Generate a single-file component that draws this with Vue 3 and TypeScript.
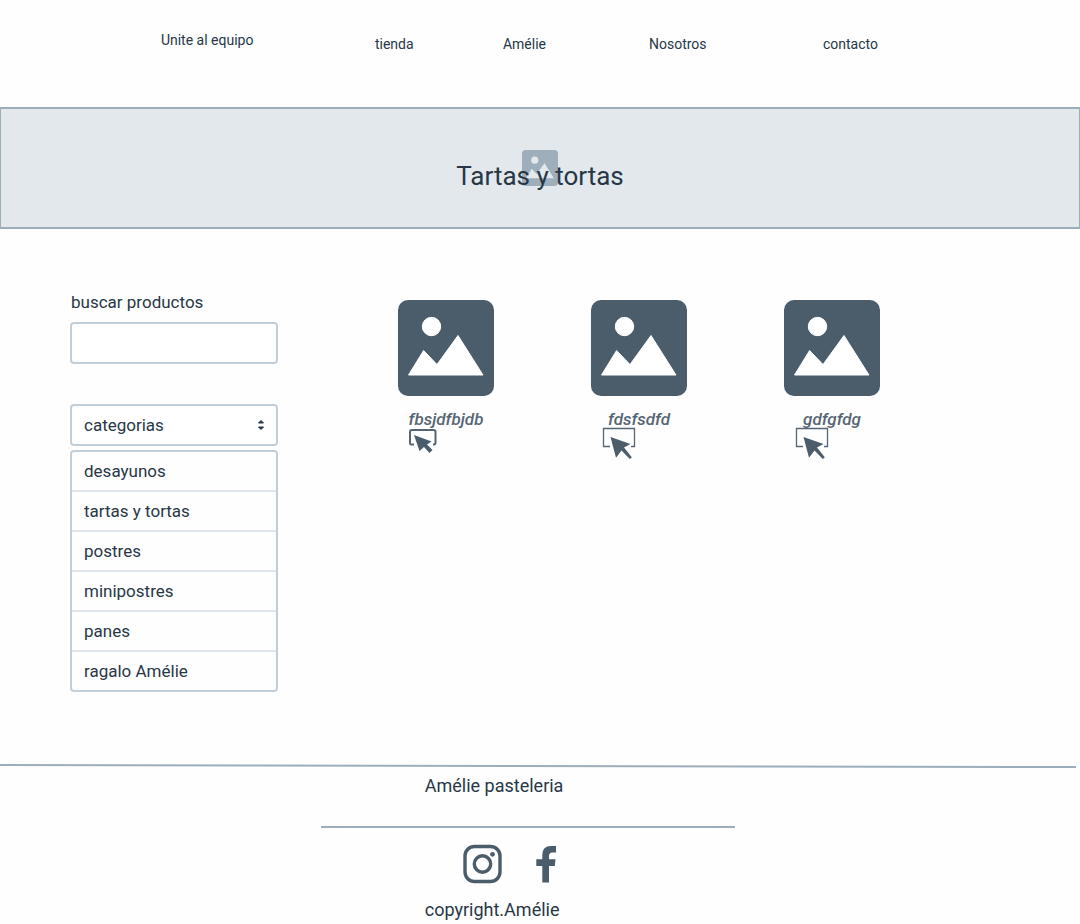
<script setup lang="ts">
import { ref } from 'vue'

interface Product {
  id: number
  name: string
  compact: boolean
}

const links: string[] = ['Unite al equipo', 'tienda', 'Amélie', 'Nosotros', 'contacto']
const categories: string[] = ['desayunos', 'tartas y tortas', 'postres', 'minipostres', 'panes', 'ragalo Amélie']
const products: Product[] = [
  { id: 1, name: 'fbsjdfbjdb', compact: true },
  { id: 2, name: 'fdsfsdfd', compact: false },
  { id: 3, name: 'gdfgfdg', compact: false },
]

const search = ref('')
const category = ref('')
</script>

<template>
  <div class="page">
    <nav class="nav" aria-label="Principal">
      <a v-for="link in links" :key="link" class="nav-link" href="#">{{ link }}</a>
    </nav>

    <header class="banner">
      <svg class="banner-icon" viewBox="0 0 96 96" aria-hidden="true">
        <rect class="banner-tile" width="96" height="96" rx="10" />
        <circle class="banner-cut" cx="34" cy="27" r="9.5" />
        <path class="banner-cut" d="M11 75 L26 50 L39 64 L60 35 L85 75 Z" />
      </svg>
      <h1 class="title">Tartas y tortas</h1>
    </header>

    <main class="content">
      <aside class="sidebar">
        <label class="label" for="search">buscar productos</label>
        <input id="search" v-model="search" class="field" type="text" />

        <div class="select-wrap">
          <select v-model="category" class="field select" aria-label="categorias">
            <option value="">categorias</option>
            <option v-for="item in categories" :key="item" :value="item">{{ item }}</option>
          </select>
          <svg class="arrows" viewBox="0 0 8 12" aria-hidden="true">
            <path d="M4 1.500 L6.500 4 H1.500 Z M4 10.500 L6.500 8 H1.500 Z" />
          </svg>
        </div>
        <ul class="options">
          <li v-for="item in categories" :key="item" class="option">
            <button class="option-button" type="button" @click="category = item">{{ item }}</button>
          </li>
        </ul>
      </aside>

      <section class="products" aria-label="Productos">
        <article v-for="product in products" :key="product.id" class="product">
          <svg class="picture" viewBox="0 0 96 96" aria-hidden="true">
            <rect class="tile" width="96" height="96" rx="10" />
            <circle class="cut" cx="33.500" cy="26.500" r="9.200" />
            <path class="cut" d="M10.500 75 L25.600 50.500 L39 64.500 L60 35.500 L85 75 Z" />
          </svg>
          <h2 class="name">{{ product.name }}</h2>
          <button class="pick" type="button" :aria-label="'Elegir ' + product.name">
            <svg v-if="product.compact" class="pick-icon" viewBox="0 0 34 34" aria-hidden="true">
              <path class="frame thick" d="M5 17.500 H2.500 Q1 17.500 1 16 V5 Q1 3 3 3 H24.500 Q26.500 3 26.500 5 V15.500 Q26.500 17.500 25 17.500 H24" />
              <path class="cursor" d="M5 8 L22.500 14.500 L18 17.500 L23.500 23 L20.500 26 L15 20 L10.500 24 Z" />
            </svg>
            <svg v-else class="pick-icon" viewBox="0 0 34 34" aria-hidden="true">
              <path class="frame" d="M8 19.500 H1.500 V1.500 H32.500 V19.500 H29" />
              <path class="cursor" d="M8.500 10 L28.500 17 L22 20.500 L29.800 30.300 L27.800 32 L19.500 23.500 L14 30.800 Z" />
            </svg>
          </button>
        </article>
      </section>
    </main>

    <footer class="footer">
      <svg class="rule" viewBox="0 0 1080 4" preserveAspectRatio="none" aria-hidden="true">
        <line x1="0" y1="1" x2="1076" y2="3" />
      </svg>
      <div class="footer-body">
        <p class="footer-text brand">Amélie pasteleria</p>
        <hr class="divider" />
        <div class="social">
          <a class="social-link" href="#" aria-label="Instagram">
            <svg class="social-icon" viewBox="0 0 40 40" aria-hidden="true">
              <rect class="line" x="3" y="2.500" width="35" height="35" rx="9.500" />
              <circle class="line" cx="20.500" cy="20" r="8.200" />
              <circle class="solid" cx="30.500" cy="10.300" r="2.400" />
            </svg>
          </a>
          <a class="social-link" href="#" aria-label="Facebook">
            <svg class="social-icon" viewBox="0 0 40 40" aria-hidden="true">
              <path class="solid" d="M16.300 38.500 V22 H10.300 V15.300 H16.300 V11 Q16.300 2 25 2 H30 V8.500 H26.500 Q23 8.500 23 12 V15.300 H29.500 L28.800 22 H23 V38.500 Z" />
            </svg>
          </a>
        </div>
        <p class="footer-text">copyright.Amélie</p>
      </div>
    </footer>
  </div>
</template>

<style>
body {
  margin: 0;
  background: #fefefe;
}
</style>

<style scoped>
.page {
  font-family: Roboto, "Liberation Sans", sans-serif;
  font-size: 17px;
  line-height: 24px;
  color: #273746;
}

.nav {
  display: grid;
  grid-template-columns: 214fr 128fr 146fr 174fr 257fr;
  align-items: end;
  height: 24px;
  padding: 30px 0 53px 14.9%;
  font-size: 14px;
  line-height: 20px;
}

.nav-link {
  justify-self: start;
  color: inherit;
  text-decoration: none;
  white-space: nowrap;
}

.nav-link:first-child {
  align-self: start;
}

.banner {
  position: relative;
  padding: 50px 0 34px;
  border: solid #9caebc;
  border-width: 2px 1px;
  background: #e2e8ec;
}

.banner-icon {
  position: absolute;
  top: 50%;
  left: 50%;
  width: 36px;
  height: 36px;
  margin: -18px 0 0 -18px;
}

.banner-tile {
  fill: #9eaebb;
}

.banner-cut {
  fill: #e2e8ec;
}

.title {
  position: relative;
  margin: 0;
  font-size: 26px;
  font-weight: 400;
  line-height: 34px;
  text-align: center;
}

.content {
  display: flex;
  gap: 120px;
  padding: 61px 70px 72px;
}

.sidebar {
  flex: 0 0 208px;
}

.label {
  display: block;
  margin: 0 0 8px 1px;
}

.field {
  display: block;
  box-sizing: border-box;
  width: 100%;
  height: 42px;
  padding: 0 12px;
  border: 2px solid #c3ced8;
  border-radius: 4px;
  background: #fff;
  color: inherit;
  font: inherit;
}

.select-wrap {
  position: relative;
  margin: 40px 0 4px;
}

.select {
  appearance: none;
}

.arrows {
  position: absolute;
  top: 15px;
  right: 13px;
  width: 8px;
  height: 12px;
  fill: #273746;
  stroke: #273746;
  stroke-linejoin: round;
  pointer-events: none;
}

.options {
  margin: 0;
  padding: 0;
  border: 2px solid #c3ced8;
  border-radius: 4px;
  list-style: none;
}

.option + .option {
  border-top: 2px solid #dee5ec;
}

.option-button {
  display: block;
  width: 100%;
  padding: 7px 12px;
  border: 0;
  background: none;
  color: inherit;
  font: inherit;
  text-align: left;
}

.products {
  display: grid;
  flex: 1;
  grid-template-columns: repeat(auto-fill, 96px);
  gap: 40px 97px;
  align-content: start;
  padding-top: 10px;
}

.product {
  display: flex;
  flex-direction: column;
}

.picture {
  width: 96px;
  height: 96px;
}

.tile {
  fill: #4b5c6b;
}

.cut {
  fill: #fff;
  stroke: #fff;
  stroke-linejoin: round;
}

.name {
  margin: 13px 0 0;
  color: #566573;
  font-size: 17px;
  font-style: italic;
  font-weight: 500;
  line-height: 20px;
  text-align: center;
}

.pick {
  align-self: start;
  margin: -2px 0 0 11px;
  padding: 0;
  border: 0;
  background: none;
}

.pick-icon {
  display: block;
  width: 34px;
  height: 34px;
}

.frame {
  fill: none;
  stroke: #566573;
  stroke-width: 1.3;
}

.thick {
  stroke-width: 2;
}

.cursor {
  fill: #4b5c6b;
}

.rule {
  display: block;
  width: 100%;
  height: 4px;
}

.rule line {
  stroke: #9caebc;
  stroke-width: 2;
}

.footer-body {
  width: 414px;
  margin-left: 29.7%;
}

.footer-text {
  margin: 0 0 0 104px;
  font-size: 18px;
}

.brand {
  padding-top: 6px;
}

.divider {
  height: 2px;
  margin: 28px 0 16px;
  border: 0;
  background: #9caebc;
}

.social {
  display: flex;
  gap: 24px;
  margin: 0 0 14px 141px;
}

.social-link {
  display: block;
}

.social-icon {
  display: block;
  width: 40px;
  height: 40px;
}

.line {
  fill: none;
  stroke: #4b5c6b;
  stroke-width: 3.4;
}

.solid {
  fill: #4b5c6b;
}
</style>
